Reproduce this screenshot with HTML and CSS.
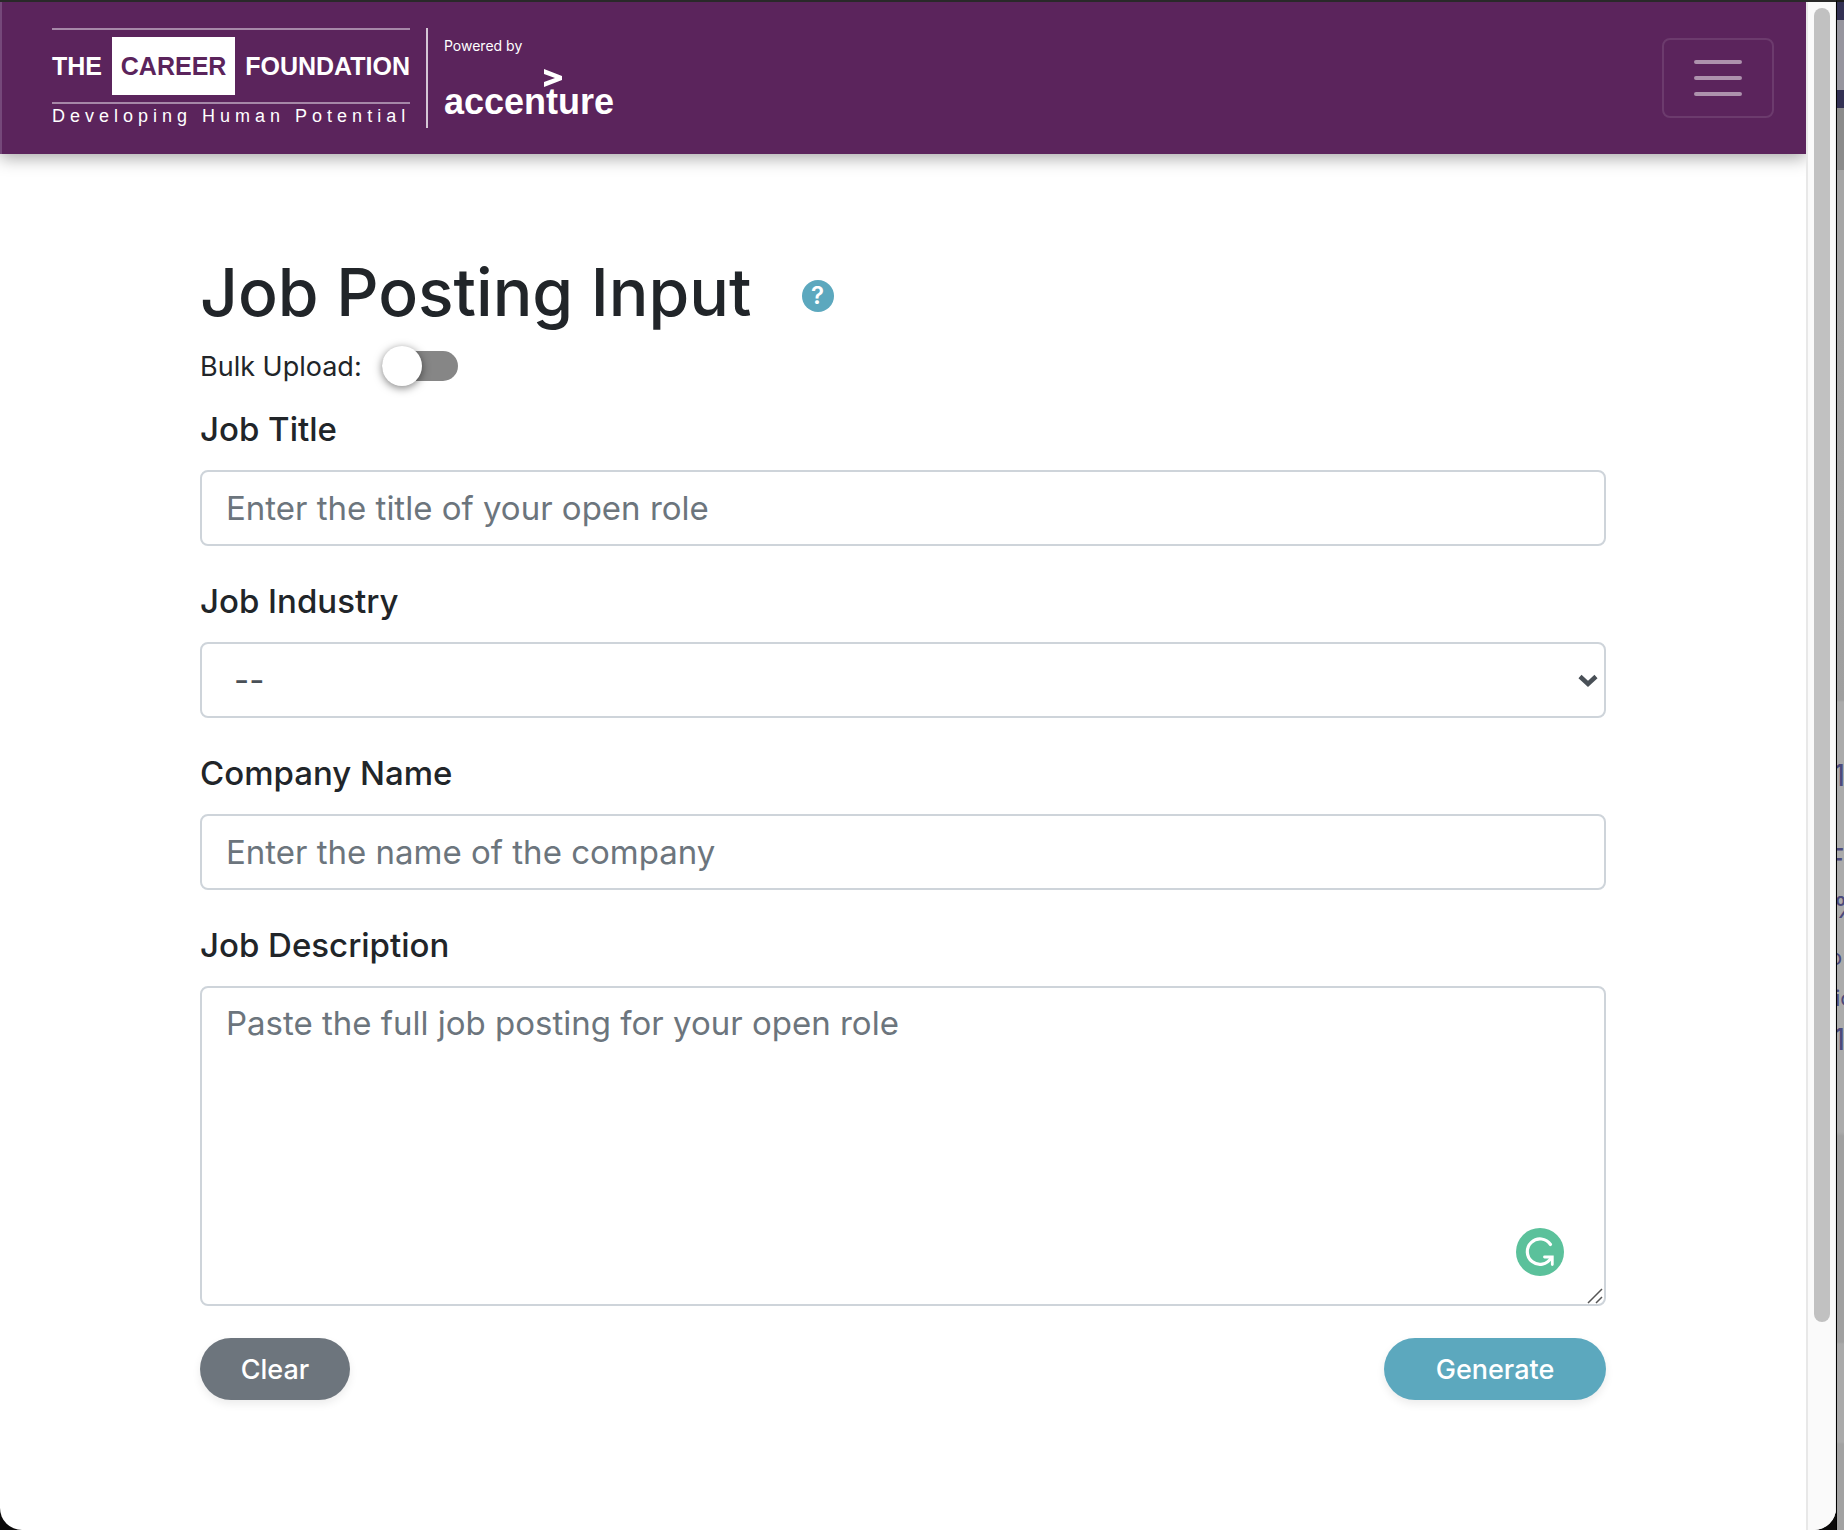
FILE: index.html
```html
<!DOCTYPE html>
<html lang="en">
<head>
<meta charset="utf-8">
<meta name="viewport" content="width=device-width, initial-scale=1">
<title>Job Posting Input</title>
<link rel="stylesheet" href="styles.css">
</head>
<body>
<div class="window">
  <div class="page">
    <header class="navbar">
      <a class="brand" href="#">
        <span class="wordmark">
          <span class="wordmark-name">
            <span>THE</span>
            <span class="wordmark-box">CAREER</span>
            <span>FOUNDATION</span>
          </span>
          <span class="tagline">Developing Human Potential</span>
        </span>
        <span class="partner">
          <span class="powered">Powered by</span>
          <svg class="partner-mark" width="18" height="18" viewBox="0 0 18 18" aria-hidden="true"><polygon points="0,0 18,7 18,11 0,18 0,13 11,9 0,5" fill="#fff"/></svg>
          <span class="partner-name">accenture</span>
        </span>
      </a>
      <button class="menu-toggle" type="button" aria-label="Toggle navigation">
        <svg width="48" height="36" viewBox="0 0 48 36" aria-hidden="true"><path d="M2 2H46M2 18H46M2 34H46" stroke="#ad92ad" stroke-width="4" stroke-linecap="round"/></svg>
      </button>
    </header>

    <main class="content">
      <div class="title-row">
        <h1>Job Posting Input</h1>
        <button class="help" type="button" aria-label="Help">?</button>
      </div>
      <form class="form">
        <div class="bulk">
          <label for="bulk">Bulk Upload:</label>
          <input class="switch" type="checkbox" role="switch" id="bulk">
        </div>
        <div class="field">
          <label for="title">Job Title</label>
          <input class="control" type="text" id="title" placeholder="Enter the title of your open role">
        </div>
        <div class="field">
          <label for="industry">Job Industry</label>
          <div class="control-wrap">
            <select class="control" id="industry"><option>--</option></select>
            <svg class="chevron" width="20" height="14" viewBox="0 0 20 14" aria-hidden="true"><path d="M2 2.500L10 10L18 2.500" fill="none" stroke="#495057" stroke-width="4.500"/></svg>
          </div>
        </div>
        <div class="field">
          <label for="company">Company Name</label>
          <input class="control" type="text" id="company" placeholder="Enter the name of the company">
        </div>
        <div class="field">
          <label for="description">Job Description</label>
          <div class="control-wrap">
            <textarea class="control" id="description" placeholder="Paste the full job posting for your open role"></textarea>
            <svg class="assistant" width="48" height="48" viewBox="0 0 48 48" aria-hidden="true"><circle cx="24" cy="24" r="24" fill="#5bc19b"/><path d="M34.500 16.500A12.700 12.700 0 1 0 35 30" fill="none" stroke="#fff" stroke-width="3.200" stroke-linecap="round"/><path d="M28.500 29H36.300V36.500" fill="none" stroke="#fff" stroke-width="2.800" stroke-linecap="round"/></svg>
            <svg class="grip" width="16" height="16" viewBox="0 0 16 16" aria-hidden="true"><path d="M1 15L15 1M9 15L15 9" stroke="#555" stroke-width="1.500"/></svg>
          </div>
        </div>
        <div class="actions">
          <button class="btn btn-secondary" type="reset">Clear</button>
          <button class="btn btn-primary" type="button">Generate</button>
        </div>
      </form>
    </main>
  </div>
  <div class="scrollbar" aria-hidden="true"><div class="thumb"></div></div>
</div>
<div class="backdrop" aria-hidden="true">
  <span class="peek peek-a">1</span>
  <span class="peek peek-b">F</span>
  <span class="peek peek-c">%</span>
  <span class="peek peek-d">o</span>
  <span class="peek peek-e">ic</span>
  <span class="peek peek-f">1</span>
</div>
</body>
</html>
```
FILE: styles.css
```css
* {
  box-sizing: border-box;
}

body {
  margin: 0;
  min-height: 100vh;
  display: flex;
  background: #0b0a0a;
  color: #212529;
  font-family: Inter, "Open Sans", sans-serif;
  font-size: 33px;
}

button,
input,
select,
textarea {
  font: inherit;
}

.window {
  flex: 1;
  min-width: 0;
  display: flex;
  border-top: 2px solid #292929;
  border-radius: 0 0 22px 22px;
  background: #fff;
  overflow: hidden;
}

.page {
  flex: 1;
  min-width: 0;
}

/* Header */
.navbar {
  display: flex;
  align-items: center;
  justify-content: space-between;
  height: 152px;
  padding: 0 32px 0 50px;
  border-left: 2px solid #75487a;
  background: #5b245c;
  box-shadow: 0 4px 16px rgba(0, 0, 0, 0.35);
}

.brand {
  display: flex;
  gap: 16px;
  height: 100px;
  color: #fff;
  text-decoration: none;
}

.wordmark {
  width: 358px;
  display: flex;
  flex-direction: column;
  font-family: "Liberation Sans", Arial, sans-serif;
}

.wordmark-name {
  height: 76px;
  display: flex;
  align-items: center;
  justify-content: space-between;
  border-top: 2px solid #a688a8;
  border-bottom: 2px solid #a688a8;
  font-size: 25px;
  font-weight: 700;
}

.wordmark-box {
  padding: 0 9px;
  background: #fff;
  color: #5b245c;
  line-height: 58px;
}

.tagline {
  font-size: 18px;
  line-height: 24px;
  letter-spacing: 5px;
  white-space: nowrap;
}

.partner {
  position: relative;
  display: flex;
  flex-direction: column;
  justify-content: space-between;
  padding: 8px 0 0 16px;
  border-left: 2px solid #d5c6d6;
}

.powered {
  font-size: 14px;
  line-height: 20px;
}

.partner-mark {
  position: absolute;
  left: 116px;
  top: 41px;
}

.partner-name {
  font-family: "Liberation Sans", Arial, sans-serif;
  font-size: 36px;
  font-weight: 700;
  line-height: 52px;
}

.menu-toggle {
  display: flex;
  align-items: center;
  justify-content: center;
  width: 112px;
  height: 80px;
  padding: 0;
  border: 2px solid #6c3b6d;
  border-radius: 8px;
  background: transparent;
}

/* Form */
.content {
  padding: 100px 200px 128px;
}

.title-row {
  display: flex;
  align-items: center;
  gap: 50px;
  margin-bottom: 16px;
}

h1 {
  margin: 0;
  font-size: 66px;
  font-weight: 500;
  line-height: 76px;
}

.help {
  width: 32px;
  height: 32px;
  margin-top: 8px;
  padding: 0;
  border: 0;
  border-radius: 50%;
  background: #5ca8be;
  color: #fff;
  font-size: 24px;
  font-weight: 600;
  line-height: 32px;
}

.bulk {
  display: flex;
  align-items: center;
  gap: 20px;
  height: 40px;
  margin-bottom: 20px;
  font-size: 27px;
}

.switch {
  appearance: none;
  display: flex;
  align-items: center;
  width: 76px;
  height: 30px;
  margin: 0;
  border-radius: 15px;
  background: #868686;
}

.switch::before {
  content: "";
  width: 40px;
  height: 40px;
  border-radius: 50%;
  background: #fff;
  box-shadow: 0 2px 8px rgba(0, 0, 0, 0.5);
}

.field {
  display: flex;
  flex-direction: column;
  gap: 18px;
  margin-bottom: 32px;
}

.field label {
  font-weight: 500;
  line-height: 46px;
}

.control {
  display: block;
  width: 100%;
  height: 76px;
  margin: 0;
  padding: 0 24px;
  border: 2px solid #ced4da;
  border-radius: 8px;
  background: #fff;
  color: #495057;
}

.control::placeholder {
  color: #6c757d;
  opacity: 1;
}

select.control {
  appearance: none;
  padding: 0 32px;
}

textarea.control {
  height: 320px;
  padding: 12px 24px;
  line-height: 46px;
  resize: none;
}

.control-wrap {
  position: relative;
}

.chevron {
  position: absolute;
  right: 8px;
  top: 32px;
  pointer-events: none;
}

.assistant {
  position: absolute;
  right: 42px;
  bottom: 30px;
}

.grip {
  position: absolute;
  right: 3px;
  bottom: 2px;
}

.actions {
  display: flex;
  justify-content: space-between;
}

.btn {
  height: 62px;
  border: 0;
  border-radius: 31px;
  color: #fff;
  font-size: 27px;
  font-weight: 500;
  box-shadow: 0 4px 8px rgba(0, 0, 0, 0.08);
}

.btn-secondary {
  width: 150px;
  background: #6d757d;
}

.btn-primary {
  width: 222px;
  background: #5ca8be;
}

/* Window scrollbar */
.scrollbar {
  width: 30px;
  padding: 6px 6px 0;
  border-left: 2px solid #e8e8e8;
  border-right: 1px solid #ededed;
  background: #fafafa;
}

.thumb {
  width: 16px;
  height: calc(86vh - 2px);
  border-radius: 8px;
  background: #c1c1c1;
}

/* Sliver of the window behind */
.backdrop {
  position: relative;
  width: 8px;
  border-top: 2px solid #1c1c1c;
  border-left: 1px solid #000;
  background: linear-gradient(#333154 18px, #96959e 18px 88px, #333154 88px 106px, #8b8b8b 106px 168px, #a6a6a6 168px 300px, #9f9f9f 698px, #ababab 700px 1130px, #a0a0a0 1134px 1305px, #a0a0a0 1340px, #aaa 1342px 1440px, #a2a2a2 1442px);
  color: #4b4a7d;
  overflow: hidden;
}

.peek {
  position: absolute;
  left: -4px;
  font-size: 30px;
  line-height: 36px;
}

.peek-a { top: 755px; }
.peek-b { top: 839px; left: -10px; }
.peek-c { top: 887px; }
.peek-d { top: 937px; left: -8px; font-size: 22px; }
.peek-e { top: 978px; left: -2px; font-size: 22px; }
.peek-f { top: 1019px; }
```
